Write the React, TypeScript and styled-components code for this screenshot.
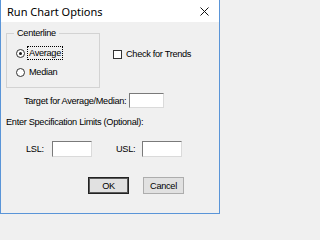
import React from "react";
import styled, { createGlobalStyle } from "styled-components";

const Global = createGlobalStyle`
  html, body { margin: 0; padding: 0; background: #f0f0f0; }
  body { width: 220px; height: 214px; overflow: hidden; }
  * { box-sizing: border-box; }
`;

const Window = styled.div`
  width: 220px;
  height: 214px;
  border: 1px solid #5a95d8;
  border-top: none;
  display: flex;
  flex-direction: column;
  background: #f0f0f0;
  font-family: "Liberation Sans", Arial, sans-serif;
  font-size: 9.2px;
  letter-spacing: -0.3px;
  color: #000;
`;

const TitleBar = styled.div`
  height: 22px;
  flex: none;
  background: #fff;
  display: flex;
  align-items: center;
  justify-content: space-between;
  padding: 0 10px 0 6px;
`;

const Title = styled.span`
  font-family: "Noto Sans", "Open Sans", sans-serif;
  font-size: 11px;
  letter-spacing: 0;
  color: #000;
`;

const CloseIcon = styled.svg`
  width: 9px;
  height: 9px;
  display: block;
`;

const Body = styled.div`
  flex: 1;
  display: flex;
  flex-direction: column;
  padding: 11px 0 0 5px;
`;

const TopRow = styled.div`
  display: flex;
  align-items: flex-start;
`;

const GroupBox = styled.div`
  position: relative;
  width: 94px;
  height: 55px;
  border: 1px solid #d3d3d3;
  display: flex;
  flex-direction: column;
  gap: 5px;
  padding: 12px 0 0 9px;
`;

const Legend = styled.span`
  position: absolute;
  top: -7px;
  left: 7px;
  padding: 0 3px;
  line-height: 12px;
  background: #f0f0f0;
`;

const OptionRow = styled.label`
  display: flex;
  align-items: center;
  height: 14px;
  gap: 2px;
`;

const Radio = styled.span<{ $checked?: boolean }>`
  width: 9px;
  height: 9px;
  border-radius: 50%;
  border: 1px solid #333;
  background: #fff;
  display: flex;
  align-items: center;
  justify-content: center;
  flex: none;
  &::after {
    content: "";
    width: 3px;
    height: 3px;
    border-radius: 50%;
    background: ${(p) => (p.$checked ? "#1a1a1a" : "transparent")};
  }
`;

const OptionText = styled.span<{ $focused?: boolean }>`
  line-height: 12px;
  padding: 0 1px;
  border: 1px dotted ${(p) => (p.$focused ? "#000" : "transparent")};
`;

const CheckRow = styled.label`
  display: flex;
  align-items: center;
  gap: 4px;
  height: 14px;
  margin: 14px 0 0 13px;
`;

const CheckBox = styled.span`
  width: 9px;
  height: 9px;
  border: 1px solid #333;
  background: #fff;
  flex: none;
`;

const TargetRow = styled.div`
  display: flex;
  align-items: center;
  gap: 3px;
  margin-top: 5px;
  padding-left: 18px;
`;

const TextBox = styled.div<{ $w: number; $h: number }>`
  width: ${(p) => p.$w}px;
  height: ${(p) => p.$h}px;
  background: #fff;
  border: 1px solid #dadada;
  border-top-color: #7a7a7a;
  border-left-color: #7a7a7a;
`;

const SectionText = styled.div`
  line-height: 12px;
  margin-top: 8px;
`;

const LimitsRow = styled.div`
  display: flex;
  align-items: center;
  gap: 24px;
  margin-top: 13px;
  padding-left: 20px;
`;

const LimitField = styled.div`
  display: flex;
  align-items: center;
`;

const LimitLabel = styled.span`
  width: 26px;
`;

const ButtonRow = styled.div`
  display: flex;
  gap: 14px;
  margin-top: 20px;
  padding-left: 82px;
`;

const Button = styled.button<{ $default?: boolean }>`
  width: 41px;
  height: 17px;
  padding: 0;
  font: inherit;
  letter-spacing: inherit;
  color: #000;
  background: #e1e1e1;
  border: 1px solid ${(p) => (p.$default ? "#222" : "#adadad")};
  box-shadow: ${(p) => (p.$default ? "inset 0 0 0 1px #5a5a5a" : "none")};
`;

export default function App() {
  return (
    <>
      <Global />
      <Window>
        <TitleBar>
          <Title>Run Chart Options</Title>
          <CloseIcon viewBox="0 0 9 9">
            <path d="M0.5 0.5 L8.5 8.5 M8.5 0.5 L0.5 8.5" stroke="#111" strokeWidth="1" fill="none" />
          </CloseIcon>
        </TitleBar>
        <Body>
          <TopRow>
            <GroupBox>
              <Legend>Centerline</Legend>
              <OptionRow>
                <Radio $checked />
                <OptionText $focused>Average</OptionText>
              </OptionRow>
              <OptionRow>
                <Radio />
                <OptionText>Median</OptionText>
              </OptionRow>
            </GroupBox>
            <CheckRow>
              <CheckBox />
              <span>Check for Trends</span>
            </CheckRow>
          </TopRow>
          <TargetRow>
            <span>Target for Average/Median:</span>
            <TextBox $w={35} $h={15} />
          </TargetRow>
          <SectionText>Enter Specification Limits (Optional):</SectionText>
          <LimitsRow>
            <LimitField>
              <LimitLabel>LSL:</LimitLabel>
              <TextBox $w={40} $h={16} />
            </LimitField>
            <LimitField>
              <LimitLabel>USL:</LimitLabel>
              <TextBox $w={40} $h={16} />
            </LimitField>
          </LimitsRow>
          <ButtonRow>
            <Button $default>OK</Button>
            <Button>Cancel</Button>
          </ButtonRow>
        </Body>
      </Window>
    </>
  );
}
